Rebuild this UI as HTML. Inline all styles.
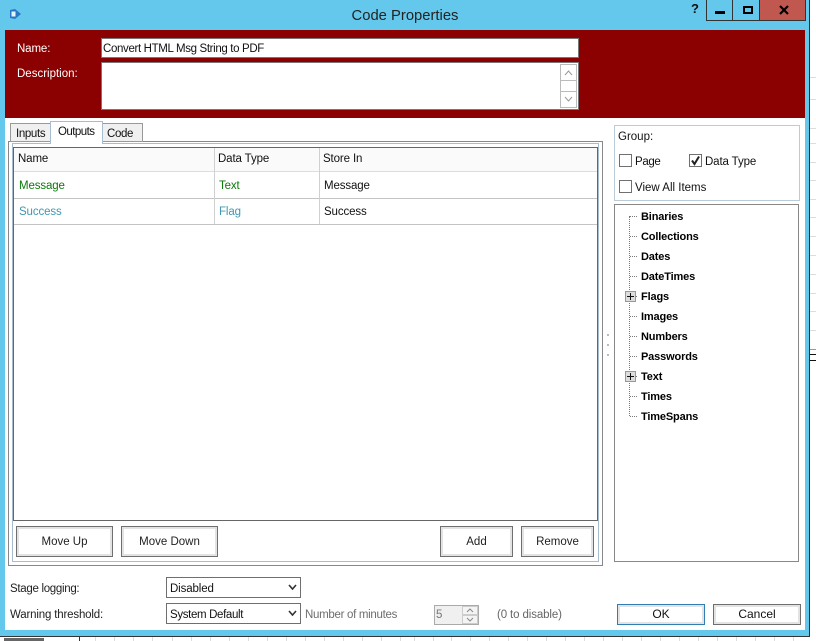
<!DOCTYPE html>
<html><head><meta charset="utf-8">
<style>
html,body{margin:0;padding:0;background:#fff}
body{width:816px;height:641px;position:relative;overflow:hidden;font-family:"Liberation Sans",sans-serif;font-size:12px;color:#111}
div{position:absolute;box-sizing:border-box}
.t{white-space:nowrap;line-height:14px;font-size:11.5px;letter-spacing:-.12px;transform:translateY(1px)}
.n{letter-spacing:-.35px}
.w{letter-spacing:0}
.btn{border:1px solid #6f6f6f;background:#fff;box-shadow:inset 0 0 0 2px #e3e3e3;text-align:center;font-size:11.5px;color:#222}
.b{font-weight:bold;font-size:11px;letter-spacing:-.15px;color:#000;white-space:nowrap;line-height:14px;left:641px;transform:translateY(1px)}
.cb{width:13px;height:13px;border:1px solid #707070;background:#fff}
.h{height:0;border-top:1px dotted #777}
.pl{left:625px;width:11px;height:11px;border:1px solid #999;background:#ddd}
.sel{border:1px solid #6f6f6f;background:#fff}
.r{left:810px;width:6px;height:1px;background:#ddd}
.k{top:637px;width:1px;height:4px;background:#ddd}
</style></head><body>
<div style="left:809px;top:0;width:7px;height:641px;background:#fff"></div>
<div style="left:809px;top:0;width:1px;height:636px;background:#333"></div>
<div style="left:0;top:636px;width:810px;height:1px;background:#333"></div>
<div style="left:0;top:0;width:809px;height:636px;background:#63c8ec"></div>
<div style="left:5px;top:30px;width:800px;height:600px;background:#fff"></div>
<div style="left:5px;top:30px;width:800px;height:88px;background:#8b0000"></div>

<div class="r" style="top:77px"></div><div class="r" style="top:99px"></div><div class="r" style="top:128px"></div><div class="r" style="top:143px"></div><div class="r" style="top:162px"></div><div class="r" style="top:180px"></div><div class="r" style="top:199px"></div><div class="r" style="top:217px"></div><div class="r" style="top:236px"></div><div class="r" style="top:255px"></div><div class="r" style="top:274px"></div><div class="r" style="top:293px"></div><div class="r" style="top:311px"></div><div class="r" style="top:330px"></div>
<div class="r" style="top:349px;background:#999"></div><div class="r" style="top:354px;background:#111"></div><div class="r" style="top:360px;background:#111"></div>
<div class="k" style="left:79px;background:#333"></div><div class="k" style="left:95px"></div><div class="k" style="left:114px"></div><div class="k" style="left:133px"></div><div class="k" style="left:152px"></div><div class="k" style="left:172px"></div><div class="k" style="left:191px"></div><div class="k" style="left:210px"></div><div class="k" style="left:229px"></div><div class="k" style="left:248px"></div><div class="k" style="left:267px"></div><div class="k" style="left:286px"></div><div class="k" style="left:305px"></div><div class="k" style="left:324px"></div><div class="k" style="left:343px"></div><div class="k" style="left:362px"></div><div class="k" style="left:381px"></div><div class="k" style="left:400px"></div><div class="k" style="left:414px"></div><div class="k" style="left:433px"></div><div class="k" style="left:451px"></div><div class="k" style="left:470px"></div><div class="k" style="left:489px"></div><div class="k" style="left:508px"></div><div class="k" style="left:527px"></div><div class="k" style="left:546px"></div><div class="k" style="left:565px"></div><div class="k" style="left:584px"></div><div class="k" style="left:603px"></div><div class="k" style="left:622px"></div><div class="k" style="left:641px"></div><div class="k" style="left:660px"></div><div class="k" style="left:679px"></div><div class="k" style="left:698px"></div><div class="k" style="left:717px"></div><div class="k" style="left:736px"></div><div class="k" style="left:755px"></div><div class="k" style="left:774px"></div><div class="k" style="left:793px"></div>
<div style="left:4px;top:638px;width:40px;height:3px;background:#666"></div>

<svg style="position:absolute;left:8px;top:7px" width="15" height="15" viewBox="0 0 15 15"><path d="M2 3L7 2L13 7L7 12L2 11Z" fill="#2a78c4"/><rect x="3.500" y="4.500" width="4" height="5" fill="#e8f4fb"/></svg>
<div class="t" style="left:305px;width:200px;text-align:center;top:7px;font-size:14.8px;line-height:18px;color:#222;letter-spacing:0;transform:none">Code Properties</div>

<div class="t" style="left:691px;top:1px;font-weight:bold;font-size:13px;color:#111">?</div>
<div style="left:706px;top:0;width:26px;height:21px;border:1px solid #333;border-top:0;border-right:0"></div>
<div style="left:732px;top:0;width:27px;height:21px;border:1px solid #333;border-top:0;border-right:0"></div>
<div style="left:759px;top:0;width:47px;height:21px;background:#c0584f;border:1px solid #333;border-top:0"></div>
<div style="left:715px;top:11px;width:10px;height:3px;background:#000"></div>
<div style="left:743px;top:6px;width:10px;height:8px;border:2px solid #000"></div>
<svg style="position:absolute;left:779px;top:5px" width="10" height="10" viewBox="0 0 10 10"><path d="M1 1L9 9M9 1L1 9" stroke="#000" stroke-width="2.200"/></svg>

<div class="t" style="left:17px;top:41px;color:#fff">Name:</div>
<div class="t w" style="left:17px;top:66px;color:#fff">Description:</div>
<div style="left:101px;top:38px;width:478px;height:20px;background:#fff;border:1px solid #777"></div>
<div class="t n" style="left:103px;top:41px;color:#111">Convert HTML Msg String to PDF</div>
<div style="left:101px;top:62px;width:478px;height:48px;background:#fff;border:1px solid #777"></div>
<div style="left:560px;top:64px;width:17px;height:44px;background:#fff;border:1px solid #bbb"></div>
<div style="left:560px;top:80px;width:17px;height:12px;border-top:1px solid #bbb;border-bottom:1px solid #bbb"></div>
<svg style="position:absolute;left:560px;top:64px" width="17" height="44"><path d="M5 11L8.500 7L12 11M5 33L8.500 37L12 33" fill="none" stroke="#999"/></svg>

<div style="left:8px;top:141px;width:595px;height:425px;border:1px solid #888"></div>
<div style="left:12px;top:143px;width:587px;height:419px;border:1px solid #a9bccf"></div>
<div style="left:10px;top:123px;width:41px;height:19px;border:1px solid #999;background:#f0f0f0"></div>
<div class="t n" style="left:16px;top:126px">Inputs</div>
<div style="left:102px;top:123px;width:41px;height:19px;border:1px solid #999;background:#f0f0f0"></div>
<div class="t n" style="left:107px;top:126px">Code</div>
<div style="left:50px;top:121px;width:53px;height:23px;border:1px solid #a9bccf;border-bottom:0;background:#fff"></div>
<div class="t" style="left:58px;top:124px;letter-spacing:-.55px">Outputs</div>

<div style="left:13px;top:147px;width:585px;height:374px;border:1px solid #666;background:#fff"></div>
<div style="left:14px;top:148px;width:583px;height:24px;background:#fafafa;border-bottom:1px solid #ddd"></div>
<div style="left:14px;top:198px;width:583px;height:1px;background:#c4c4c4"></div>
<div style="left:14px;top:224px;width:583px;height:1px;background:#c4c4c4"></div>
<div style="left:214px;top:148px;width:1px;height:76px;background:#d0d0d0"></div>
<div style="left:319px;top:148px;width:1px;height:76px;background:#d0d0d0"></div>
<div class="t" style="left:18px;top:151px">Name</div>
<div class="t" style="left:218px;top:151px">Data Type</div>
<div class="t" style="left:323px;top:151px">Store In</div>
<div class="t" style="left:19px;top:178px;color:#0a7a0a">Message</div>
<div class="t" style="left:219px;top:178px;color:#0a7a0a">Text</div>
<div class="t" style="left:324px;top:178px">Message</div>
<div class="t" style="left:19px;top:204px;color:#3f98b0">Success</div>
<div class="t" style="left:219px;top:204px;color:#3f98b0">Flag</div>
<div class="t" style="left:324px;top:204px">Success</div>

<div class="btn" style="left:16px;top:526px;width:97px;height:31px;line-height:31px">Move Up</div>
<div class="btn" style="left:121px;top:526px;width:97px;height:31px;line-height:31px">Move Down</div>
<div class="btn" style="left:440px;top:526px;width:73px;height:31px;line-height:31px">Add</div>
<div class="btn" style="left:521px;top:526px;width:73px;height:31px;line-height:31px">Remove</div>

<div style="left:614px;top:125px;width:186px;height:76px;border:1px solid #bccbd8"></div>
<div class="t w" style="left:618px;top:129px">Group:</div>
<div class="cb" style="left:619px;top:154px"></div>
<div class="t n" style="left:635px;top:154px">Page</div>
<div class="cb" style="left:689px;top:154px"></div>
<svg style="position:absolute;left:689px;top:154px" width="13" height="13"><path d="M3 6.500L5.500 10L10 2.500" fill="none" stroke="#222" stroke-width="2"/></svg>
<div class="t" style="left:705px;top:154px">Data Type</div>
<div class="cb" style="left:619px;top:180px"></div>
<div class="t w" style="left:635px;top:180px">View All Items</div>

<div style="left:614px;top:204px;width:185px;height:358px;border:1px solid #888;background:#fff"></div>
<div style="left:629px;top:216px;width:0;height:200px;border-left:1px dotted #777"></div>
<div class="h" style="left:630px;top:216px;width:7px"></div>
<div class="h" style="left:630px;top:236px;width:7px"></div>
<div class="h" style="left:630px;top:256px;width:7px"></div>
<div class="h" style="left:630px;top:276px;width:7px"></div>
<div class="h" style="left:630px;top:296px;width:7px"></div>
<div class="h" style="left:630px;top:316px;width:7px"></div>
<div class="h" style="left:630px;top:336px;width:7px"></div>
<div class="h" style="left:630px;top:356px;width:7px"></div>
<div class="h" style="left:630px;top:376px;width:7px"></div>
<div class="h" style="left:630px;top:396px;width:7px"></div>
<div class="h" style="left:630px;top:416px;width:7px"></div>
<div class="pl" style="top:291px"></div><div style="left:627px;top:296px;width:7px;height:1px;background:#111"></div><div style="left:630px;top:293px;width:1px;height:7px;background:#111"></div>
<div class="pl" style="top:371px"></div><div style="left:627px;top:376px;width:7px;height:1px;background:#111"></div><div style="left:630px;top:373px;width:1px;height:7px;background:#111"></div>
<div class="b" style="top:209px">Binaries</div>
<div class="b" style="top:229px">Collections</div>
<div class="b" style="top:249px">Dates</div>
<div class="b" style="top:269px">DateTimes</div>
<div class="b" style="top:289px">Flags</div>
<div class="b" style="top:309px">Images</div>
<div class="b" style="top:329px">Numbers</div>
<div class="b" style="top:349px">Passwords</div>
<div class="b" style="top:369px">Text</div>
<div class="b" style="top:389px">Times</div>
<div class="b" style="top:409px">TimeSpans</div>
<div style="left:607px;top:334px;width:2px;height:2px;background:#bbb"></div>
<div style="left:607px;top:344px;width:2px;height:2px;background:#bbb"></div>
<div style="left:607px;top:354px;width:2px;height:2px;background:#bbb"></div>

<div class="t" style="left:10px;top:581px;color:#222;letter-spacing:-.3px">Stage logging:</div>
<div class="t" style="left:10px;top:607px;color:#222;letter-spacing:-.17px">Warning threshold:</div>
<div class="sel" style="left:166px;top:577px;width:135px;height:21px"></div>
<div class="t" style="left:170px;top:581px">Disabled</div>
<div class="sel" style="left:166px;top:603px;width:135px;height:21px"></div>
<div class="t n" style="left:170px;top:607px">System Default</div>
<svg style="position:absolute;left:288px;top:584px" width="9" height="7"><path d="M1 1L4.500 5L8 1" fill="none" stroke="#333" stroke-width="1.600"/></svg>
<svg style="position:absolute;left:288px;top:610px" width="9" height="7"><path d="M1 1L4.500 5L8 1" fill="none" stroke="#333" stroke-width="1.600"/></svg>
<div class="t" style="left:305px;top:607px;color:#6d6d6d;letter-spacing:-.3px">Number of minutes</div>
<div style="left:434px;top:605px;width:45px;height:20px;border:1px solid #aaa;background:#f0f0f0"></div>
<div class="t" style="left:436px;top:607px;color:#777">5</div>
<div style="left:462px;top:606px;width:16px;height:9px;border:1px solid #ccc;background:#f4f4f4"></div>
<div style="left:462px;top:615px;width:16px;height:9px;border:1px solid #ccc;background:#f4f4f4"></div>
<svg style="position:absolute;left:462px;top:606px" width="16" height="18"><path d="M5 6L8 3L11 6M5 12L8 15L11 12" fill="none" stroke="#888"/></svg>
<div class="t" style="left:497px;top:607px;color:#666">(0 to disable)</div>
<div class="btn" style="left:617px;top:604px;width:88px;height:21px;line-height:19px;border-color:#2f7fb5;color:#111;font-size:12px">OK</div>
<div class="btn" style="left:713px;top:604px;width:88px;height:21px;line-height:19px;color:#111;font-size:12px">Cancel</div>
</body></html>
